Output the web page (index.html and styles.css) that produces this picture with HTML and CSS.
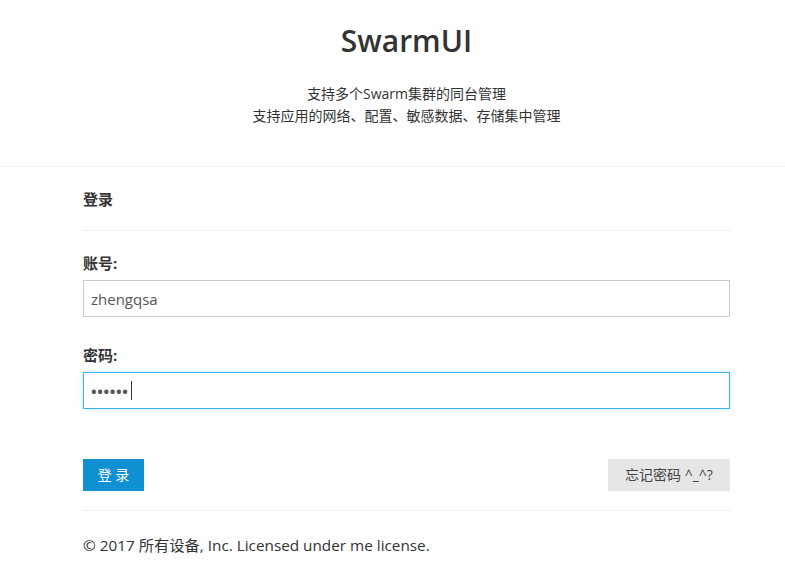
FILE: index.html
```html
<!DOCTYPE html>
<html lang="zh-CN">
<head>
<meta charset="utf-8">
<title>SwarmUI</title>
<link rel="stylesheet" href="styles.css">
</head>
<body>
<header class="header">
  <h1 class="brand">SwarmUI</h1>
  <p class="tagline">支持多个Swarm集群的同台管理<br>支持应用的网络、配置、敏感数据、存储集中管理</p>
</header>
<main class="panel">
  <h3 class="panel-title">登录</h3>
  <form class="form">
    <label class="label" for="user">账号:</label>
    <input class="field" id="user" type="text" value="zhengqsa">
    <label class="label label-pw" for="pw">密码:</label>
    <div class="field-wrap">
      <input class="field field-focus" id="pw" type="text" value="••••••">
      <span class="caret"></span>
    </div>
    <div class="actions">
      <button type="button" class="btn btn-primary">登 录</button>
      <button type="button" class="btn btn-default">忘记密码 ^_^?</button>
    </div>
  </form>
  <footer class="footer">© 2017 所有设备, Inc. Licensed under me license.</footer>
</main>
</body>
</html>
```
FILE: styles.css
```css
* { box-sizing: border-box; }
html, body { margin: 0; padding: 0; background: #fff; }
body {
  font-family: "Open Sans", "Noto Sans CJK SC", sans-serif;
  color: #333;
}
.header {
  text-align: center;
  padding: 20px 0 39px 28px;
  border-bottom: 1px solid #eee;
}
.brand {
  margin: 0;
  font-size: 30px;
  line-height: 42px;
  font-weight: 600;
  color: #333;
}
.tagline {
  margin: 21px 0 0;
  font-size: 14px;
  line-height: 22px;
  color: #333;
}
.panel {
  margin-left: 83px;
  width: 647px;
}
.panel-title {
  margin: 0;
  padding: 22px 0 21px;
  font-size: 15px;
  line-height: 20px;
  font-weight: 700;
  border-bottom: 1px solid #eee;
}
.form {
  display: flex;
  flex-direction: column;
  padding-top: 22px;
  padding-bottom: 19px;
  border-bottom: 1px solid #eee;
}
.label {
  font-size: 15px;
  line-height: 20px;
  font-weight: 700;
  margin-bottom: 7px;
}
.label-pw { margin-top: 28px; }
.field {
  display: block;
  width: 100%;
  height: 37px;
  padding: 0 7px;
  border: 1px solid #ccc;
  border-radius: 0;
  font-family: "Open Sans", "Noto Sans CJK SC", sans-serif;
  font-size: 15px;
  color: #555;
  outline: none;
  background: #fff;
}
.field-wrap { position: relative; }
.field-focus {
  border-color: #3bb4f2;
  box-shadow: 0 0 5px rgba(59, 180, 242, 0.3);
  letter-spacing: 0.6px;
  font-weight: 700;
  color: #555;
}
.caret {
  position: absolute;
  left: 48px;
  top: 9px;
  width: 1px;
  height: 19px;
  background: #333;
}
.actions {
  display: flex;
  justify-content: space-between;
  margin-top: 50px;
}
.btn {
  height: 32px;
  border: 0;
  border-radius: 0;
  font-family: "Open Sans", "Noto Sans CJK SC", sans-serif;
  font-size: 14px;
  line-height: 32px;
  padding: 0 12px;
  cursor: pointer;
}
.btn-primary {
  width: 61px;
  background: #0e90d2;
  color: #fff;
}
.btn-default {
  width: 122px;
  background: #e6e6e6;
  color: #444;
}
.footer {
  padding-top: 24px;
  font-size: 15.3px;
  line-height: 20px;
  color: #333;
}
```
